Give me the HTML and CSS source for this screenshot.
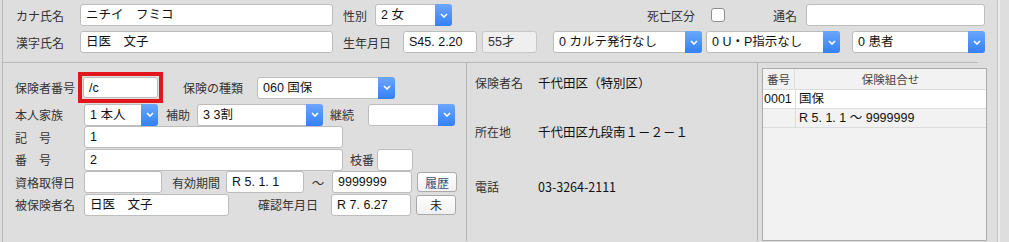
FILE: index.html
```html
<!DOCTYPE html>
<html lang="ja">
<head>
    <meta charset="UTF-8">
    <meta name="viewport" content="width=device-width, initial-scale=1.0">
    <title>患者登録</title>
    <link rel="stylesheet" href="styles.css">
</head>
<body>
    <div class="window">
        <div class="patient">
            <div class="row">
                <label class="lbl lbl-name">カナ氏名</label>
                <div class="field f-name">ニチイ　フミコ</div>
                <label class="lbl lbl-sex">性別</label>
                <div class="select s-sex"><span class="val">2 女</span><span class="arrow"><svg width="8" height="5" viewBox="0 0 8 5"><path d="M1 1l3 3 3-3" fill="none" stroke="#fff" stroke-width="1.6"/></svg></span></div>
                <label class="lbl lbl-death">死亡区分</label>
                <span class="check"></span>
                <label class="lbl lbl-alias">通名</label>
                <div class="field f-alias"></div>
            </div>
            <div class="row">
                <label class="lbl lbl-name">漢字氏名</label>
                <div class="field f-name">日医　文子</div>
                <label class="lbl lbl-birth">生年月日</label>
                <div class="field f-birth">S45. 2.20</div>
                <div class="field readonly f-age">55才</div>
                <div class="select s-karte"><span class="val">0 カルテ発行なし</span><span class="arrow"><svg width="8" height="5" viewBox="0 0 8 5"><path d="M1 1l3 3 3-3" fill="none" stroke="#fff" stroke-width="1.6"/></svg></span></div>
                <div class="select s-up"><span class="val">0 U・P指示なし</span><span class="arrow"><svg width="8" height="5" viewBox="0 0 8 5"><path d="M1 1l3 3 3-3" fill="none" stroke="#fff" stroke-width="1.6"/></svg></span></div>
                <div class="select s-kind"><span class="val">0 患者</span><span class="arrow"><svg width="8" height="5" viewBox="0 0 8 5"><path d="M1 1l3 3 3-3" fill="none" stroke="#fff" stroke-width="1.6"/></svg></span></div>
            </div>
        </div>

        <div class="insurance">
            <div class="ins-left">
                <div class="row">
                    <label class="lbl lbl-ins">保険者番号</label>
                    <span class="focus-ring"><span class="field f-insno">/c</span></span>
                    <label class="lbl lbl-type">保険の種類</label>
                    <div class="select s-type"><span class="val">060 国保</span><span class="arrow"><svg width="8" height="5" viewBox="0 0 8 5"><path d="M1 1l3 3 3-3" fill="none" stroke="#fff" stroke-width="1.6"/></svg></span></div>
                </div>
                <div class="row">
                    <label class="lbl lbl-left">本人家族</label>
                    <div class="select s-family"><span class="val">1 本人</span><span class="arrow"><svg width="8" height="5" viewBox="0 0 8 5"><path d="M1 1l3 3 3-3" fill="none" stroke="#fff" stroke-width="1.6"/></svg></span></div>
                    <label class="lbl lbl-aid">補助</label>
                    <div class="select s-aid"><span class="val">3 3割</span><span class="arrow"><svg width="8" height="5" viewBox="0 0 8 5"><path d="M1 1l3 3 3-3" fill="none" stroke="#fff" stroke-width="1.6"/></svg></span></div>
                    <label class="lbl lbl-cont">継続</label>
                    <div class="select s-cont"><span class="val"></span><span class="arrow"><svg width="8" height="5" viewBox="0 0 8 5"><path d="M1 1l3 3 3-3" fill="none" stroke="#fff" stroke-width="1.6"/></svg></span></div>
                </div>
                <div class="row">
                    <label class="lbl lbl-left">記　号</label>
                    <div class="field f-mark">1</div>
                </div>
                <div class="row">
                    <label class="lbl lbl-left">番　号</label>
                    <div class="field f-mark">2</div>
                    <label class="lbl lbl-branch">枝番</label>
                    <div class="field f-branch"></div>
                </div>
                <div class="row">
                    <label class="lbl lbl-left">資格取得日</label>
                    <div class="field f-date1"></div>
                    <label class="lbl lbl-valid">有効期間</label>
                    <div class="field f-date2">R 5. 1. 1</div>
                    <span class="tilde">～</span>
                    <div class="field f-date3">9999999</div>
                    <button class="btn btn-history">履歴</button>
                </div>
                <div class="row">
                    <label class="lbl lbl-left">被保険者名</label>
                    <div class="field f-insured">日医　文子</div>
                    <label class="lbl lbl-confirm">確認年月日</label>
                    <div class="field f-date3">R 7. 6.27</div>
                    <button class="btn">未</button>
                </div>
            </div>

            <div class="ins-mid">
                <div class="info info-name"><span class="info-lbl">保険者名</span><span>千代田区（特別区）</span></div>
                <div class="info info-addr"><span class="info-lbl">所在地</span><span>千代田区九段南１－２－１</span></div>
                <div class="info info-tel"><span class="info-lbl">電話</span><span>03-3264-2111</span></div>
            </div>

            <div class="ins-right">
                <div class="list">
                    <div class="list-row list-head"><span class="col-no">番号</span><span class="col-combo">保険組合せ</span></div>
                    <div class="list-row list-sel"><span class="col-no">0001</span><span class="col-combo">国保</span></div>
                    <div class="list-row"><span class="col-no"></span><span class="col-combo">R 5. 1. 1 ～ 9999999</span></div>
                </div>
            </div>
        </div>
    </div>
</body>
</html>
```

FILE: styles.css
```css
body {
    margin: 0;
    background: #dedede;
    font-family: "Liberation Sans", "Noto Sans CJK JP", sans-serif;
    font-size: 12.5px;
    color: #111;
    overflow: hidden;
}
.window {
    margin-left: 2px;
    width: 994px;
    height: 242px;
    overflow: hidden;
    border-left: 1px solid #b9b9b9;
    border-right: 1px solid #c2c2c2;
    box-shadow: 2px 0 0 #ececec;
}
.row {
    display: flex;
    align-items: center;
    height: 22px;
}

/* labels */
.lbl {
    flex: none;
    color: #333;
    font-family: "Noto Sans CJK JP", sans-serif;
    font-size: 12px;
    white-space: nowrap;
}
.lbl-name { width: 64px; }
.lbl-sex { width: 32px; margin-left: 10px; }
.lbl-death { width: 64px; margin-left: 195px; }
.lbl-alias { width: 33px; margin-left: 48px; }
.lbl-birth { width: 60px; margin-left: 10px; }
.lbl-ins { width: 63px; }
.lbl-left { width: 69px; }
.lbl-type { width: 74px; margin-left: 20px; }
.lbl-aid { width: 31px; margin-left: 8px; }
.lbl-cont { width: 38px; margin-left: 7px; }
.lbl-branch { width: 27px; margin-left: 7px; }
.lbl-valid { width: 54px; margin-left: 10px; }
.lbl-confirm { width: 73px; margin-left: 29px; }

/* text fields */
.field {
    flex: none;
    box-sizing: border-box;
    height: 22px;
    line-height: 20px;
    padding: 0 5px;
    background: #fff;
    border: 1px solid #bdbdbd;
    border-radius: 3px;
    white-space: nowrap;
    overflow: hidden;
}
.field.readonly { background: #efefef; border-color: #c8c8c8; color: #333; }
.focus-ring {
    flex: none;
    display: flex;
    padding: 1px;
    border: 4px solid #e3161c;
}
.f-name { width: 253px; }
.f-alias { width: 179px; }
.f-birth { width: 74px; }
.f-age { width: 55px; margin-left: 5px; }
.f-insno { width: 75px; height: 21px; }
.f-mark { width: 259px; }
.f-branch { width: 36px; }
.f-date1 { width: 78px; }
.f-date2 { width: 78px; }
.f-date3 { width: 80px; }
.f-insured { width: 145px; }
.tilde {
    width: 28px;
    text-align: center;
    color: #333;
}

/* select boxes */
.select {
    flex: none;
    display: flex;
    box-sizing: border-box;
    height: 22px;
    background: #fff;
    border: 1px solid #bdbdbd;
    border-radius: 3px;
}
.select .val {
    flex: 1;
    line-height: 20px;
    padding-left: 5px;
    white-space: nowrap;
    overflow: hidden;
}
.select .arrow {
    width: 17px;
    margin: -1px -1px -1px 0;
    display: flex;
    align-items: center;
    justify-content: center;
    background: linear-gradient(#6ba7fb, #3380f6);
    border-radius: 0 3px 3px 0;
}
.s-sex { width: 77px; }
.s-karte { width: 149px; margin-left: 16px; }
.s-up { width: 134px; margin-left: 4px; }
.s-kind { width: 133px; margin-left: 12px; }
.s-type { width: 138px; }
.s-family { width: 74px; }
.s-aid { width: 126px; }
.s-cont { width: 87px; }

.check {
    flex: none;
    box-sizing: border-box;
    width: 14px;
    height: 14px;
    background: #fff;
    border: 1px solid #8f8f8f;
    border-radius: 3px;
}

.btn {
    flex: none;
    box-sizing: border-box;
    width: 40px;
    height: 20px;
    margin-left: 5px;
    padding: 0;
    font-family: "Noto Sans CJK JP", sans-serif;
    font-size: 12px;
    color: #222;
    background: linear-gradient(#ffffff, #f0f0f0);
    border: 1px solid #a9a9a9;
    border-radius: 3px;
}
.btn-history { color: #3b4f78; }

/* top patient block */
.patient {
    width: 975px;
    height: 63px;
    padding-left: 13px;
    padding-top: 4px;
    box-sizing: border-box;
    border-bottom: 1px solid #b8b8b8;
}
.patient .row + .row { margin-top: 5px; }

/* insurance block */
.insurance {
    display: flex;
    height: 178px;
}
.ins-left {
    width: 451px;
    padding: 13px 0 0 12px;
    border-right: 1px solid #b8b8b8;
}
.ins-left .row:first-child { margin-top: -4px; height: 31px; }
.ins-left .row + .row { margin-top: 0.6px; }

.ins-mid {
    width: 282px;
    padding: 11px 0 0 8px;
    border-right: 1px solid #b8b8b8;
}
.info {
    display: flex;
    line-height: 18px;
    font-family: "Noto Sans CJK JP", sans-serif;
}
.info-lbl { width: 63px; color: #333; font-size: 12px; }
.info-addr { margin-top: 31px; }
.info-tel { margin-top: 37px; }

.ins-right {
    width: 225px;
    padding: 5px 0 0 4px;
}
.list {
    box-sizing: border-box;
    height: 173px;
    background: #f2f2f2;
    border: 1px solid #ababab;
}
.list-row {
    display: flex;
    height: 18px;
    line-height: 18px;
    border-bottom: 1px solid #dcdcdc;
}
.list-head {
    height: 20px;
    line-height: 20px;
    font-size: 11.5px;
    color: #444;
    font-family: "Noto Sans CJK JP", sans-serif;
}
.list-sel { background: #fff; }
.col-no {
    width: 31px;
    padding-left: 1px;
    border-right: 1px solid #dcdcdc;
}
.list-head .col-no,
.list-head .col-combo { text-align: center; padding-left: 0; }
.col-combo {
    flex: 1;
    padding-left: 3px;
}
```
